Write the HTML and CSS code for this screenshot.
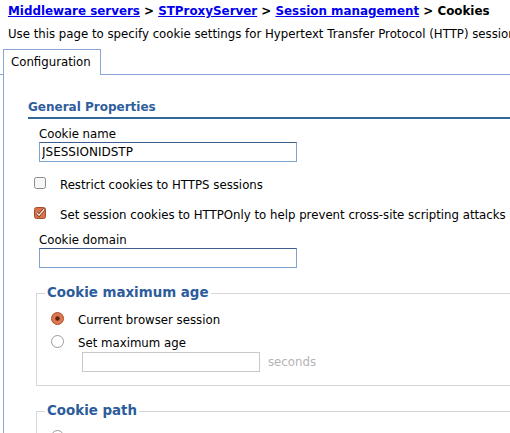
FILE: index.html
```html
<!DOCTYPE html>
<html>
<head>
<meta charset="utf-8">
<link rel="stylesheet" href="styles.css">
</head>
<body>
<div class="page">
  <div class="crumb"><a href="#">Middleware servers</a> &gt; <a href="#">STProxyServer</a> &gt; <a href="#">Session management</a> &gt; Cookies</div>
  <div class="desc">Use this page to specify cookie settings for Hypertext Transfer Protocol (HTTP) session support.</div>
  <div class="tabbar"><div class="tab">Configuration</div></div>
  <div class="panel">
    <div class="section-title">General Properties</div>
    <div class="form">
      <div class="field-label">Cookie name</div>
      <input class="text" type="text" value="JSESSIONIDSTP">
      <div class="check-row first">
        <svg class="box" width="12" height="12" viewBox="0 0 12 12"><rect x="0.5" y="0.5" width="11" height="11" rx="2" fill="#f6f6f6" stroke="#8c8c8c"/></svg>
        <span>Restrict cookies to HTTPS sessions</span>
      </div>
      <div class="check-row">
        <svg class="box" width="12" height="12" viewBox="0 0 12 12"><rect x="0.5" y="0.5" width="11" height="11" rx="2" fill="#d9734b" stroke="#a44f2c"/><path d="M2.6 5.6 L5 8.2 L10.2 2.2" fill="none" stroke="#6a2b12" stroke-width="2.6"/><path d="M2.6 5.6 L5 8.2 L10.2 2.2" fill="none" stroke="#fbeae2" stroke-width="1.3"/></svg>
        <span>Set session cookies to HTTPOnly to help prevent cross-site scripting attacks</span>
      </div>
      <div class="field-label domain">Cookie domain</div>
      <input class="text" type="text" value="">
      <fieldset class="group">
        <legend>Cookie maximum age</legend>
        <div class="radio-row">
          <svg class="radio" width="13" height="13" viewBox="0 0 13 13"><circle cx="6.5" cy="6.5" r="6" fill="#dc7752" stroke="#a8502d"/><circle cx="6.5" cy="6.5" r="2.2" fill="#5e2410"/></svg>
          <span>Current browser session</span>
        </div>
        <div class="radio-row second">
          <svg class="radio" width="13" height="13" viewBox="0 0 13 13"><circle cx="6.5" cy="6.5" r="6" fill="#ffffff" stroke="#9a9a9a"/></svg>
          <span>Set maximum age</span>
        </div>
        <div class="age-row">
          <input class="text small" type="text" value="" disabled>
          <span class="unit">seconds</span>
        </div>
      </fieldset>
      <fieldset class="group">
        <legend>Cookie path</legend>
        <div class="radio-row">
          <svg class="radio" width="13" height="13" viewBox="0 0 13 13"><circle cx="6.5" cy="6.5" r="6" fill="#ffffff" stroke="#9a9a9a"/></svg>
          <span>Use context root</span>
        </div>
        <div class="radio-row second">
          <svg class="radio" width="13" height="13" viewBox="0 0 13 13"><circle cx="6.5" cy="6.5" r="6" fill="#ffffff" stroke="#9a9a9a"/></svg>
          <span>Set cookie path</span>
        </div>
      </fieldset>
    </div>
  </div>
</div>
</body>
</html>
```
FILE: styles.css
```css
html, body {
  margin: 0;
  padding: 0;
  overflow: hidden;
  background: #ffffff;
}
body {
  font-family: "DejaVu Sans", Verdana, sans-serif;
  font-size: 11.75px;
  line-height: 16px;
  color: #000000;
}
.page {
  width: 760px;
}
.crumb {
  padding: 3px 0 0 8px;
  font-size: 11.9px;
  font-weight: bold;
  white-space: nowrap;
}
.crumb a {
  color: #0000ee;
  text-decoration: underline;
}
.desc {
  margin-top: 7px;
  padding-left: 8px;
  white-space: nowrap;
}
.tabbar {
  margin-top: 7px;
  padding-left: 3px;
  display: flex;
  height: 25px;
  border-bottom: 1px solid #8ba7d7;
}
.tab {
  box-sizing: border-box;
  width: 98px;
  height: 26px;
  margin-bottom: -1px;
  padding: 4px 0 0 7px;
  border: 1px solid #8ba7d7;
  border-bottom: none;
  background: #ffffff;
}
.panel {
  margin-left: 3px;
  border-left: 1px solid #8ba7d7;
  padding: 24px 0 40px 24px;
}
.section-title {
  font-size: 12px;
  font-weight: bold;
  color: #2f5e9c;
  padding-bottom: 2px;
  border-bottom: 2px solid #336699;
}
.form {
  display: flex;
  flex-direction: column;
  align-items: flex-start;
}
.field-label {
  margin: 7px 0 0 11px;
}
.field-label.domain {
  margin-top: 9px;
}
input.text {
  box-sizing: border-box;
  width: 258px;
  height: 20px;
  margin: 0 0 0 11px;
  padding: 0 2px;
  font-family: "DejaVu Sans", Verdana, sans-serif;
  font-size: 12px;
  color: #000000;
  border: 1px solid #7ea3d2;
  border-top-color: #3f5f92;
  background: #ffffff;
  outline: none;
}
.check-row {
  display: flex;
  align-items: flex-start;
  gap: 14px;
  margin: 14px 0 0 6px;
  white-space: nowrap;
}
.check-row.first {
  margin-top: 15px;
}
.check-row .box {
  flex: none;
  margin-top: 0;
}
.group {
  align-self: stretch;
  margin: 17px 0 0 8px;
  padding: 11px 0 13px 8px;
  border: 1px solid #d6d6d6;
  border-right: none;
  min-width: 0;
}
.group legend {
  padding: 0 2px;
  font-size: 13.4px;
  line-height: 16px;
  font-weight: bold;
  color: #2c5c9b;
}
.radio-row {
  display: flex;
  align-items: flex-start;
  gap: 14px;
  margin-left: 6px;
  white-space: nowrap;
}
.radio-row.second {
  margin-top: 7px;
}
.radio-row .radio {
  flex: none;
}
.age-row {
  display: flex;
  align-items: center;
  gap: 8px;
  margin: 1px 0 0 26px;
}
input.text.small {
  width: 178px;
  height: 20px;
  border: 1px solid #c8c8c8;
  background: #ffffff;
}
.unit {
  color: #b4b4b4;
}
```
